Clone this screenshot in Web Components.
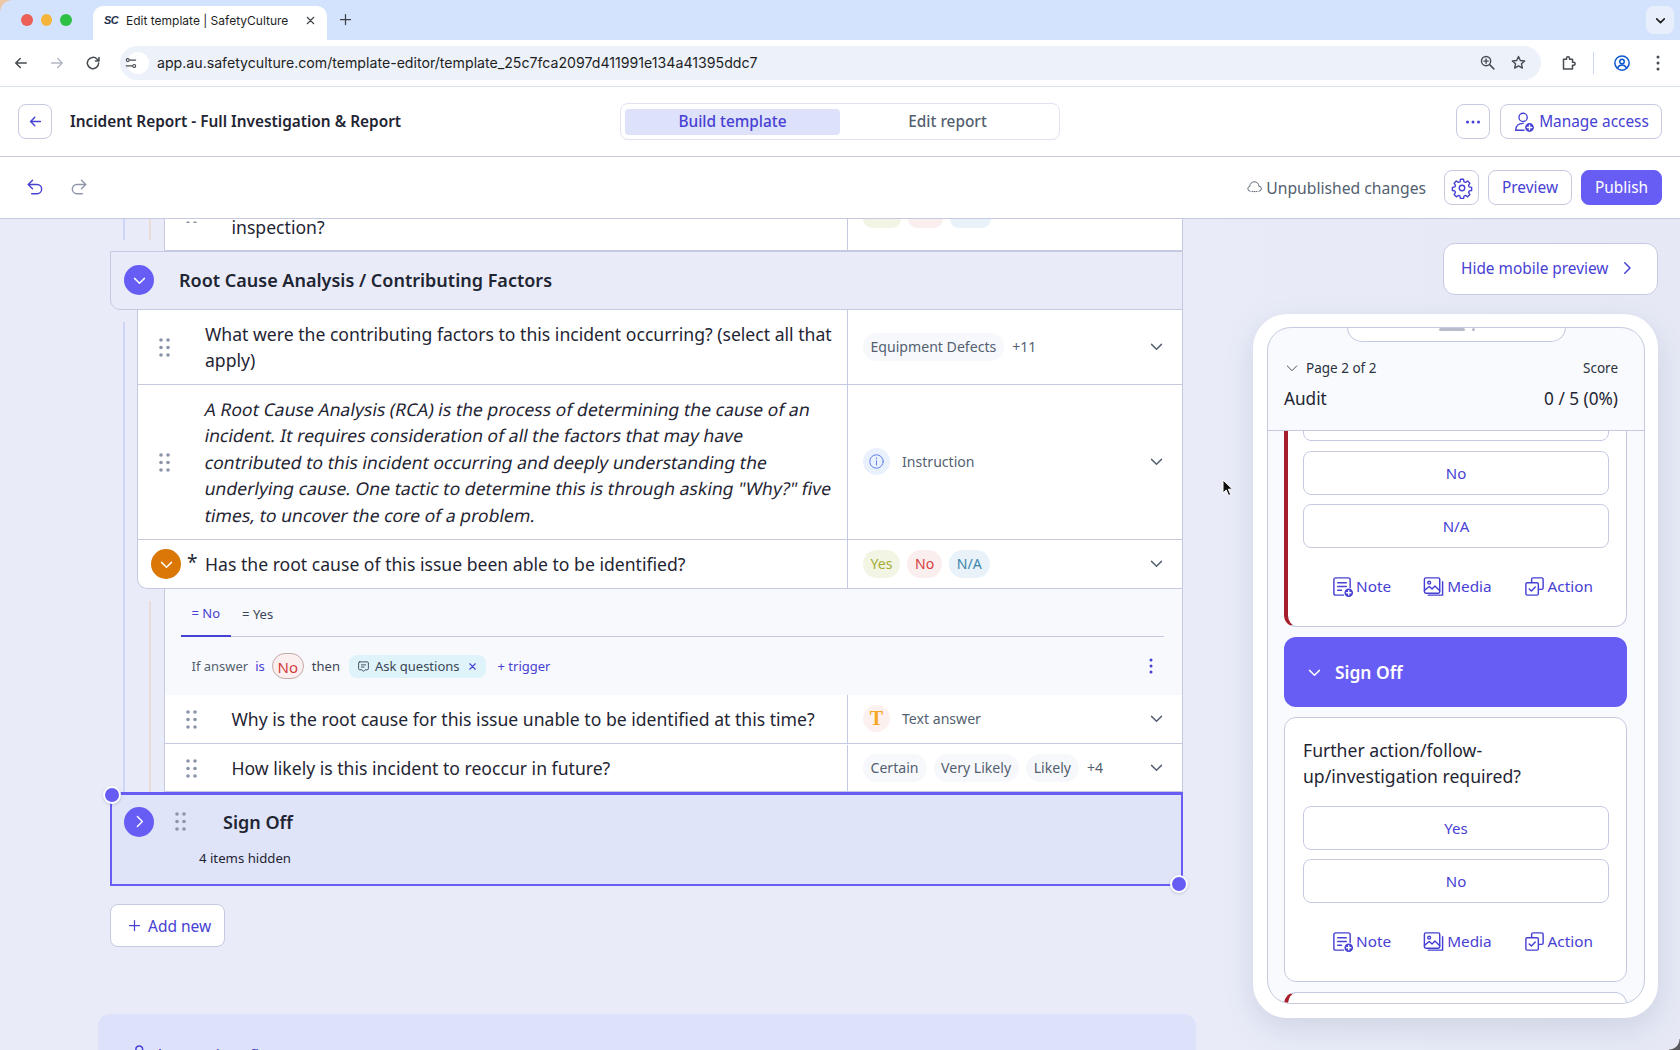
<!DOCTYPE html>
<html lang="en">
<head>
<meta charset="utf-8">
<title>Edit template | SafetyCulture</title>
<style>
  html, body { margin: 0; padding: 0; width: 1680px; height: 1050px; overflow: hidden; }
  body {
    font-family: "Noto Sans", "Open Sans", sans-serif;
    color: #1f2533;
    background: #e9ecf8;
    display: flex;
    flex-direction: column;
  }
</style>
</head>
<body>
  <chrome-tabs></chrome-tabs>
  <chrome-toolbar></chrome-toolbar>
  <app-header></app-header>
  <editor-toolbar></editor-toolbar>
  <editor-area>
    <template-list>
      <tmpl-group guide="blue" tail>
        <tmpl-group guide="pink" tail>
          <tmpl-row drag="clip">inspection?
            <chip-stub slot="answer" w="38" tone="#f2f5e4"></chip-stub><chip-stub slot="answer" w="35" tone="#fbeeee"></chip-stub><chip-stub slot="answer" w="41" tone="#e8f2f8"></chip-stub>
          </tmpl-row>
        </tmpl-group>
      </tmpl-group>
      <tmpl-section>Root Cause Analysis / Contributing Factors</tmpl-section>
      <tmpl-group guide="blue">
        <tmpl-row style="height:75px">What were the contributing factors to this incident occurring? (select all that apply)
          <ans-chip slot="answer">Equipment Defects</ans-chip><ans-more slot="answer">+11</ans-more>
        </tmpl-row>
        <tmpl-row style="height:155px">
          <skew-line>A Root Cause Analysis (RCA) is the process of determining the cause of an</skew-line>
          <skew-line>incident. It requires consideration of all the factors that may have</skew-line>
          <skew-line>contributed to this incident occurring and deeply understanding the</skew-line>
          <skew-line>underlying cause. One tactic to determine this is through asking "Why?" five</skew-line>
          <skew-line>times, to uncover the core of a problem.</skew-line>
          <type-badge slot="answer" type="info">Instruction</type-badge>
        </tmpl-row>
        <tmpl-row style="height:49px" required>Has the root cause of this issue been able to be identified?
          <ans-chip slot="answer" kind="yes">Yes</ans-chip><ans-chip slot="answer" kind="no">No</ans-chip><ans-chip slot="answer" kind="na">N/A</ans-chip>
        </tmpl-row>
        <tmpl-group guide="pink">
          <logic-panel></logic-panel>
          <tmpl-row style="height:49px">Why is the root cause for this issue unable to be identified at this time?
            <type-badge slot="answer" type="text">Text answer</type-badge>
          </tmpl-row>
          <tmpl-row style="height:48px;padding-top:1px">How likely is this incident to reoccur in future?
            <ans-chip slot="answer">Certain</ans-chip><ans-chip slot="answer">Very Likely</ans-chip><ans-chip slot="answer">Likely</ans-chip><ans-more slot="answer">+4</ans-more>
          </tmpl-row>
        </tmpl-group>
      </tmpl-group>
      <tmpl-section selected>Sign Off</tmpl-section>
      <add-new></add-new>
      <approval-block></approval-block>
    </template-list>
    <mobile-side>
      <hide-preview></hide-preview>
      <phone-frame>
        <mp-card clipped style="margin-top:-19px">
          <mp-option style="margin-top:-16px;margin-bottom:10px">Yes</mp-option>
          <mp-option>No</mp-option>
          <mp-option>N/A</mp-option>
          <mp-actions></mp-actions>
        </mp-card>
        <mp-section>Sign Off</mp-section>
        <mp-card question="Further action/follow-up/investigation required?">
          <mp-option>Yes</mp-option>
          <mp-option>No</mp-option>
          <mp-actions></mp-actions>
        </mp-card>
        <mp-card clipped></mp-card>
      </phone-frame>
    </mobile-side>
  </editor-area>
  <mouse-cursor></mouse-cursor>
  <window-corners></window-corners>

<script>
const ICONS = {
  back: '<path d="M19 12H5M11 6l-6 6 6 6"/>',
  forward: '<path d="M5 12h14M13 6l6 6-6 6"/>',
  reload: '<path d="M19.5 12a7.5 7.5 0 1 1-2.2-5.3L20 9.2M20 4.5v4.8h-4.8"/>',
  undo: '<path d="M9 4L4 9l5 5"/><path d="M4 9h10.5a5.5 5.5 0 0 1 0 11H8"/>',
  redo: '<path d="M15 4l5 5-5 5"/><path d="M20 9H9.5a5.5 5.5 0 0 0 0 11H16"/>',
  chevDown: '<path d="M5 9l7 7 7-7"/>',
  chevRight: '<path d="M9 5l7 7-7 7"/>',
  plus: '<path d="M12 4v16M4 12h16"/>',
  close: '<path d="M6 6l12 12M18 6L6 18"/>',
  tune: '<path d="M10 7h10M4 17h10"/><circle cx="6.5" cy="7" r="2.5"/><circle cx="17.5" cy="17" r="2.5"/>',
  zoom: '<circle cx="10" cy="10" r="6.5"/><path d="M15 15l6 6M10 7v6M7 10h6"/>',
  star: '<path d="M12 3.5l2.6 5.6 6.1.7-4.5 4.1 1.2 6-5.4-3-5.4 3 1.2-6-4.5-4.1 6.100-.7z"/>',
  puzzle: '<path d="M6 7h4V5.500a2 2 0 0 1 4 0V7h4v4h1.500a2 2 0 0 1 0 4H18v5H6z"/>',
  profile: '<circle cx="12" cy="12" r="9.500"/><circle cx="12" cy="10" r="3"/><path d="M6 18.500c1.500-3 3.500-4 6-4s4.500 1 6 4"/>',
  gear: '<circle cx="12" cy="12" r="3"/><path d="M10.300 2.500h3.400l.5 2.700 1.700.7 2.300-1.500 2.400 2.400-1.500 2.300.7 1.700 2.700.5v3.400l-2.700.5-.7 1.700 1.500 2.300-2.400 2.400-2.300-1.500-1.700.7-.5 2.700h-3.400l-.5-2.700-1.700-.7-2.300 1.500-2.400-2.400 1.500-2.300-.7-1.700-2.700-.5v-3.400l2.700-.5.7-1.700-1.500-2.300 2.400-2.400 2.300 1.500 1.700-.7z"/>',
  cloud: '<path d="M5 18a4 4 0 0 1-.5-7.900 7 7 0 0 1 14.500-.1A4 4 0 0 1 19 18"/><path d="M8 18.500h8" stroke-dasharray="1.500 2"/>',
  access: '<circle cx="11" cy="7" r="4.500"/><path d="M3 21c0-5 3-7.500 8-7.500"/><path d="M3 21h9"/><circle cx="18" cy="18" r="4.800" fill="currentColor" stroke="none"/><path d="M18 15.500v5M15.500 18h5" stroke="#fff"/>',
  info: '<circle cx="12" cy="12" r="9.500"/><path d="M12 11v6M12 7v1.200"/>',
  chat: '<path d="M5 3.500h14a2 2 0 0 1 2 2V16a2 2 0 0 1-2 2h-4l-3 3-3-3H5a2 2 0 0 1-2-2V5.500a2 2 0 0 1 2-2z"/><path d="M8 9h8M8 13h5"/>',
  note: '<path d="M13 21H5a2 2 0 0 1-2-2V5a2 2 0 0 1 2-2h13a2 2 0 0 1 2 2v8"/><path d="M7 8h9M7 12h9M7 16h4"/><circle cx="18.500" cy="18.500" r="4.500" fill="currentColor" stroke="none"/><path d="M18.500 16.300v4.400M16.300 18.500h4.400" stroke="#fff"/>',
  media: '<rect x="2.500" y="3" width="16" height="16" rx="1.500"/><path d="M21.500 7v14h-15"/><circle cx="7.500" cy="8" r="1.500"/><path d="M2.500 16l5-4 3 2.500 3-3 5 5"/>',
  action: '<path d="M9 7V4.500A1.500 1.500 0 0 1 10.500 3h9A1.500 1.500 0 0 1 21 4.500v9a1.500 1.500 0 0 1-1.500 1.500H17"/><rect x="3" y="8" width="13" height="13" rx="1.500"/><path d="M6.500 14.500l2.300 2.300 4-4.300"/>'
};

class UiIcon extends HTMLElement {
  connectedCallback() {
    const size = this.getAttribute('size') || 18;
    const sw = this.getAttribute('sw') || 2;
    this.attachShadow({ mode: 'open' }).innerHTML = `
      <style>:host { display: inline-flex; flex: none; line-height: 0; }</style>
      <svg width="${size}" height="${size}" viewBox="0 0 24 24" fill="none" stroke="currentColor"
        stroke-width="${sw}" stroke-linecap="round" stroke-linejoin="round">${ICONS[this.getAttribute('name')]}</svg>`;
  }
}

class DragDots extends HTMLElement {
  connectedCallback() {
    let dots = '';
    for (const y of [2, 9.5, 17]) for (const x of [2, 9]) dots += `<circle cx="${x}" cy="${y}" r="1.800"/>`;
    this.attachShadow({ mode: 'open' }).innerHTML = `
      <style>:host { display: inline-flex; flex: none; line-height: 0; }</style>
      <svg width="11" height="19" viewBox="0 0 11 19" fill="#8b94a9">${dots}</svg>`;
  }
}

// small helper: plain shadow element from a string
function shadowEl(name, html) {
  customElements.define(name, class extends HTMLElement {
    connectedCallback() {
      this.attachShadow({ mode: 'open' }).innerHTML = typeof html === 'function' ? html(this) : html;
    }
  });
}

customElements.define('ui-icon', UiIcon);
customElements.define('drag-dots', DragDots);

shadowEl('chrome-tabs', `
  <style>
    :host { display: flex; height: 40px; background: #d3e3fd; flex: none; align-items: flex-end; font-family: Inter, sans-serif; }
    .lights { display: flex; gap: 8px; padding: 0 0 14px 21px; width: 72px; box-sizing: border-box; align-self: flex-end; }
    .lights i { width: 12px; height: 12px; border-radius: 50%; display: block; }
    .tab {
      width: 234px; height: 34px; background: #fff; border-radius: 10px 10px 0 0; box-sizing: border-box;
      display: flex; align-items: center; padding: 0 10px 6px 11px; font-size: 12px; color: #1f1f1f; margin-left: 21px;
    }
    .fav { font: italic 700 11px "Liberation Sans", sans-serif; color: #23304d; width: 22px; letter-spacing: -.6px; }
    .title { flex: 1; white-space: nowrap; }
    .tab ui-icon { color: #3c4043; }
    .new { margin: 0 0 13px 11px; color: #3c4043; line-height: 0; }
    .end { margin-left: auto; margin-right: 6px; margin-bottom: 6px; width: 28px; height: 28px; border-radius: 8px; background: #e7effd;
           display: flex; align-items: center; justify-content: center; color: #1f1f1f; }
  </style>
  <div class="lights"><i style="background:#ec5f57"></i><i style="background:#f5b53a"></i><i style="background:#2fc145"></i></div>
  <div class="tab"><span class="fav">SC</span><span class="title">Edit template | SafetyCulture</span><ui-icon name="close" size="13"></ui-icon></div>
  <div class="new"><ui-icon name="plus" size="15"></ui-icon></div>
  <div class="end"><ui-icon name="chevDown" size="13" sw="3"></ui-icon></div>
`);

shadowEl('chrome-toolbar', `
  <style>
    :host { display: flex; align-items: center; height: 47px; box-sizing: border-box; background: #fff; border-bottom: 1px solid #dde3ee;
            flex: none; color: #474c52; font-family: Inter, sans-serif; padding-bottom: 1px; }
    .nav { width: 120px; display: flex; gap: 18px; padding-left: 12px; box-sizing: border-box; }
    .pill { width: 1421px; height: 34px; border-radius: 17px; background: #edf2fa; display: flex; align-items: center; padding-left: 7px; box-sizing: border-box; }
    .site { width: 22px; height: 22px; border-radius: 50%; background: #fff; display: flex; align-items: center; justify-content: center; margin-right: 8px; }
    .url { font-size: 14.150px; color: #1f1f1f; flex: 1; white-space: nowrap; }
    .pill ui-icon { margin-right: 14px; }
    .tools { display: flex; align-items: center; margin-left: 18px; }
    .sep { width: 1px; height: 22px; background: #c9d8f0; margin: 0 19px 0 16px; }
  </style>
  <div class="nav"><ui-icon name="back" size="18"></ui-icon><ui-icon name="forward" size="18" style="color:#b4b8c4"></ui-icon><ui-icon name="reload" size="18"></ui-icon></div>
  <div class="pill">
    <span class="site"><ui-icon name="tune" size="14"></ui-icon></span>
    <span class="url">app.au.safetyculture.com/template-editor/template_25c7fca2097d411991e134a41395ddc7</span>
    <ui-icon name="zoom" size="17"></ui-icon><ui-icon name="star" size="17"></ui-icon>
  </div>
  <div class="tools">
    <ui-icon name="puzzle" size="18"></ui-icon><span class="sep"></span>
    <ui-icon name="profile" size="18" style="color:#0b57d0"></ui-icon>
    <svg width="4" height="16" viewBox="0 0 4 16" fill="#474c52" style="margin-left:25px"><circle cx="2" cy="2" r="1.500"/><circle cx="2" cy="8" r="1.500"/><circle cx="2" cy="14" r="1.500"/></svg>
  </div>
`);

shadowEl('app-button', `
  <style>
    :host { display: inline-flex; flex: none; align-items: center; justify-content: center; gap: 4px; height: 35px; box-sizing: border-box;
            border: 1px solid #c5cae0; border-radius: 8px; background: #fff; color: #4740d4; font-size: 15.400px; white-space: nowrap; }
    :host([primary]) { background: #675df4; border-color: #675df4; color: #fff; }
  </style>
  <slot></slot>
`);

shadowEl('app-header', `
  <style>
    :host { display: grid; grid-template-columns: 602px 440px 1fr; align-items: center; height: 70px; box-sizing: border-box; padding-left: 18px;
            background: #fff; border-bottom: 1px solid #c5cae0; flex: none; }
    .left { display: flex; align-items: center; gap: 18px; }
    .title { font-weight: 600; font-size: 15.400px; color: #1f2533; white-space: nowrap; }
    .seg { display: flex; height: 37px; box-sizing: border-box; border: 1px solid #dfe3f0; border-radius: 8px; padding: 5px 4px 4px; font-size: 15.400px; }
    .seg span { flex: 1; display: flex; align-items: center; justify-content: center; border-radius: 4px; color: #545f70; font-weight: 500; padding-bottom: 2px; }
    .seg .on { background: #dde1f9; color: #4740d4; }
    .right { display: flex; justify-content: flex-end; gap: 10px; padding-right: 18px; }
  </style>
  <div class="left"><app-button style="width:34px"><ui-icon name="back" size="17" style="color:#4740d4"></ui-icon></app-button><span class="title">Incident Report - Full Investigation &amp; Report</span></div>
  <div class="seg"><span class="on">Build template</span><span>Edit report</span></div>
  <div class="right">
    <app-button style="width:34px"><svg width="16" height="4" viewBox="0 0 16 4" fill="#4740d4"><circle cx="2.500" cy="2" r="1.500"/><circle cx="8" cy="2" r="1.500"/><circle cx="13.500" cy="2" r="1.500"/></svg></app-button>
    <app-button style="width:162px"><ui-icon name="access" size="22" sw="1.500"></ui-icon>Manage access</app-button>
  </div>
`);

shadowEl('editor-toolbar', `
  <style>
    :host { display: flex; align-items: center; height: 62px; box-sizing: border-box; background: #fff; border-bottom: 1px solid #c5cae0; flex: none; padding: 0 18px 0 25px; }
    .undo { display: flex; gap: 24px; margin-top: -1px; }
    .right { margin-left: auto; display: flex; align-items: center; }
    .status { display: flex; align-items: center; gap: 4px; color: #545f70; font-size: 15.700px; margin-right: 18px; white-space: nowrap; }
  </style>
  <div class="undo"><ui-icon name="undo" size="20" sw="1.700" style="color:#4740d4"></ui-icon><ui-icon name="redo" size="20" sw="1.700" style="color:#8f97ab"></ui-icon></div>
  <div class="right">
    <span class="status"><ui-icon name="cloud" size="15" sw="1.500"></ui-icon>Unpublished changes</span>
    <app-button style="width:35px"><ui-icon name="gear" size="22" sw="1.500"></ui-icon></app-button>
    <app-button style="width:84px;margin-left:9px">Preview</app-button>
    <app-button primary style="width:81px;margin-left:9px">Publish</app-button>
  </div>
`);

shadowEl('editor-area', `
  <style>:host { display: flex; flex: 1; min-height: 0; overflow: hidden; background: linear-gradient(90deg, #e9ecf8 70%, #e6e9f5 100%); }</style>
  <slot></slot>
`);

shadowEl('template-list', `
  <style>:host { display: block; width: 1073px; margin-left: 110px; flex: none; }</style>
  <slot></slot>
`);

// nested question group, with its coloured guide line down the left
shadowEl('tmpl-group', (el) => {
  const blue = el.getAttribute('guide') === 'blue';
  const color = blue ? '#cfd5f6' : '#ecdcd8';
  const x = blue ? 13 : 12;
  const left = blue ? 27 : 26.5;
  const top = el.hasAttribute('tail') ? 0 : 12;
  const bottom = el.hasAttribute('tail') ? 11 : 0;
  return `
  <style>
    :host { display: block; padding-left: ${left}px;
      background: linear-gradient(${color}, ${color}) ${x}px ${top}px / 2px calc(100% - ${top + bottom}px) no-repeat; }
    :host([tail]) { height: 32px; }
  </style>
  <slot></slot>`;
});

customElements.define('tmpl-row', class extends HTMLElement {
  connectedCallback() {
    const required = this.hasAttribute('required');
    const clip = this.getAttribute('drag') === 'clip';
    let lead = '<drag-dots></drag-dots>';
    if (required) lead = `<span class="toggle"><ui-icon name="chevDown" size="17" sw="2"></ui-icon></span><span class="star">*</span>`;
    if (clip) lead = '<span class="clip"><drag-dots></drag-dots></span>';
    this.attachShadow({ mode: 'open' }).innerHTML = `
      <style>
        :host { display: grid; grid-template-columns: 1fr 335px; box-sizing: border-box; min-height: 32px; background: #fff;
                border: 1px solid #c5cae0; border-width: 0 1px 1px 1px; }
        :host([required]) { border-bottom-left-radius: 10px; }
        :host([drag="clip"]) { height: 32px; }
        .q { display: flex; align-items: center; min-width: 0; }
        :host([drag="clip"]) .q { align-items: flex-start; }
        :host([drag="clip"]) .text { line-height: 16px; }
        :host([drag="clip"]) .a { align-items: flex-start; padding-bottom: 0; }
        .lead { width: 67px; flex: none; padding-left: 21px; box-sizing: border-box; display: flex; align-items: center; }
        .text { font-size: 17.600px; line-height: 26.500px; color: #1f2533; padding-right: 8px; }
        .a { border-left: 1px solid #c5cae0; display: flex; align-items: center; gap: 7px; padding: 0 17px 1px 15px; position: relative; }
        .a > ui-icon { position: absolute; right: 17px; color: #545f70; }
        .toggle { width: 30px; height: 30px; margin-left: -8px; border-radius: 50%; background: #db7706; color: #fff; display: flex; align-items: center; justify-content: center; flex: none; }
        .star { margin-left: 6px; font-size: 19px; line-height: 1; margin-top: -4px; }
        .clip { height: 4px; overflow: hidden; display: block; line-height: 0; }
        .clip drag-dots { margin-top: -15px; }
      </style>
      <div class="q"><div class="lead">${lead}</div><div class="text"><slot></slot></div></div>
      <div class="a"><slot name="answer"></slot>${clip ? '' : '<ui-icon name="chevDown" size="17" sw="2"></ui-icon>'}</div>`;
  }
});

// the instruction row renders as a slanted regular face, one line at a time
shadowEl('skew-line', `
  <style>:host { display: block; white-space: nowrap; transform: skewX(-11deg); width: fit-content; }</style>
  <slot></slot>
`);

shadowEl('chip-stub', (el) => `
  <style>:host { display: block; width: ${el.getAttribute('w')}px; height: 9px; border-radius: 0 0 14px 14px; background: ${el.getAttribute('tone')}; }</style>
`);

shadowEl('ans-chip', (el) => {
  const kinds = { yes: ['#f2f5e4', '#a3ab37'], no: ['#fbeeee', '#d63d3d'], na: ['#e8f2f8', '#3b86ad'] };
  const [bg, fg] = kinds[el.getAttribute('kind')] || ['#f7f8fb', '#545f70'];
  return `
  <style>:host { display: inline-flex; align-items: center; height: 28px; padding: 0 8px 0 7.500px; border-radius: 14px; background: ${bg}; color: ${fg}; font-size: 14.100px; white-space: nowrap; }</style>
  <slot></slot>`;
});

shadowEl('ans-more', `
  <style>:host { display: inline-block; color: #545f70; font-size: 14.100px; margin-left: 1px; }</style>
  <slot></slot>
`);

shadowEl('type-badge', (el) => {
  const text = el.getAttribute('type') === 'text';
  return `
  <style>
    :host { display: inline-flex; align-items: center; gap: 12px; color: #545f70; font-size: 14.100px; }
    .c { width: 27px; height: 27px; border-radius: 50%; display: flex; align-items: center; justify-content: center; flex: none;
         background: ${text ? '#fdf1ef' : '#e9f1fd'}; color: ${text ? '#f5a623' : '#5f7df2'}; }
    .t { font: 700 20px "Liberation Serif", serif; }
  </style>
  <span class="c">${text ? '<span class="t">T</span>' : '<ui-icon name="info" size="17" sw="1.400"></ui-icon>'}</span><slot></slot>`;
});

shadowEl('logic-panel', `
  <style>
    :host { display: block; height: 106px; box-sizing: border-box; background: #f7f9fd; border-right: 1px solid #c5cae0; border-left: 1px solid #c5cae0; padding-left: 16px; font-size: 13px; }
    .tabs { display: flex; height: 48px; margin-right: 18px; border-bottom: 1px solid #c5cae0; box-sizing: border-box; }
    .tab { display: flex; align-items: center; padding: 2px 11px 0; height: 48px; box-sizing: border-box; color: #3c4555; }
    .tab.on { color: #4740d4; border-bottom: 2px solid #4740d4; }
    .rule { display: flex; align-items: center; height: 57px; color: #545f70; padding: 1px 0 0 11px; box-sizing: border-box; white-space: nowrap; }
    .is { color: #4740d4; margin-left: 7px; }
    .no { display: inline-flex; align-items: center; justify-content: center; width: 32px; height: 26px; box-sizing: border-box; margin-left: 7px; border-radius: 13px;
          border: 1px solid #c5a9a9; background: #fbf0ef; color: #d23b3b; font-size: 15px; padding-top: 2px; }
    .then { margin-left: 8px; color: #3c4555; }
    .ask { display: inline-flex; align-items: center; gap: 5px; height: 23px; padding: 0 8px; margin-left: 9px; border-radius: 8px; background: #def4fa; color: #3c4555; }
    .ask ui-icon:last-child { color: #4740d4; margin-left: 2px; }
    .add { color: #4740d4; margin-left: 12px; }
    .more { margin-left: auto; margin-right: 29px; line-height: 0; }
  </style>
  <div class="tabs"><span class="tab on">= No</span><span class="tab">= Yes</span></div>
  <div class="rule">If answer<span class="is">is</span><span class="no">No</span><span class="then">then</span>
    <span class="ask"><ui-icon name="chat" size="13" sw="1.700"></ui-icon>Ask questions<ui-icon name="close" size="11" sw="2.400"></ui-icon></span>
    <span class="add">+ trigger</span>
    <span class="more"><svg width="4" height="16" viewBox="0 0 4 16" fill="#4740d4"><circle cx="2" cy="2" r="1.500"/><circle cx="2" cy="8" r="1.500"/><circle cx="2" cy="14" r="1.500"/></svg></span>
  </div>
`);

customElements.define('tmpl-section', class extends HTMLElement {
  connectedCallback() {
    const sel = this.hasAttribute('selected');
    this.attachShadow({ mode: 'open' }).innerHTML = `
      <style>
        :host { display: block; box-sizing: border-box; height: 59px; background: #e9ecf8; border: 1px solid #c5cae0; border-bottom-left-radius: 10px; position: relative; }
        :host([selected]) { height: 94px; background: #e0e4f8; border: 2px solid #675df4; border-top-width: 3px; border-radius: 0; }
        .top { display: flex; align-items: center; height: 56px; padding-left: 13px; font-size: 18px; font-weight: 600; color: #1f2533; }
        :host([selected]) .top { height: 53px; padding-left: 12px; }
        .toggle { width: 30px; height: 30px; border-radius: 50%; background: #675df4; color: #fff; display: flex; align-items: center; justify-content: center; flex: none; margin-right: 25px; }
        :host([selected]) .toggle { margin-right: 21px; }
        :host([selected]) .title { margin-left: 37px; }
        .hidden { font-size: 13.200px; font-weight: 400; color: #1f2533; padding-left: 87px; line-height: 18px; margin-top: 1px; }
        .dot { position: absolute; width: 18px; height: 18px; box-sizing: border-box; border-radius: 50%; background: #675df4; border: 2px solid #fff; box-shadow: 0 1px 3px rgba(30,40,90,.2); }
        .dot.a { left: -9px; top: -9px; }
        .dot.b { right: -7px; bottom: -9px; }
      </style>
      <div class="top"><span class="toggle"><ui-icon name="${sel ? 'chevRight' : 'chevDown'}" size="17" sw="2"></ui-icon></span>
        ${sel ? '<drag-dots></drag-dots>' : ''}<span class="title"><slot></slot></span></div>
      ${sel ? '<div class="hidden">4 items hidden</div><span class="dot a"></span><span class="dot b"></span>' : ''}`;
  }
});

shadowEl('add-new', `
  <style>
    :host { display: flex; align-items: center; gap: 6px; width: 115px; height: 43px; box-sizing: border-box; margin-top: 18px; padding-left: 16px;
            background: #fff; border: 1px solid #c5cae0; border-radius: 8px; color: #4740d4; font-size: 15.500px; }
  </style>
  <ui-icon name="plus" size="15" sw="2"></ui-icon>Add new
`);

shadowEl('approval-block', `
  <style>
    :host { display: flex; gap: 6px; width: 1098px; height: 60px; box-sizing: border-box; margin: 67px 0 0 -12px; padding: 30px 0 0 33px;
            background: #dde1f9; border-radius: 12px 12px 0 0; color: #4740d4; font-size: 15.500px; word-spacing: 26px; }
  </style>
  <ui-icon name="access" size="18" sw="2"></ui-icon>Approval flow
`);

shadowEl('mobile-side', `
  <style>:host { display: flex; flex-direction: column; flex: none; width: 497px; box-sizing: border-box; }</style>
  <slot></slot>
`);

shadowEl('hide-preview', `
  <style>
    :host { display: flex; align-items: center; gap: 10px; flex: none; width: 215px; height: 52px; box-sizing: border-box; margin: 24px 0 0 260px; padding: 0 0 2px 17px;
            background: #fff; border: 1px solid #c5cae0; border-radius: 12px; color: #4740d4; font-size: 15.400px; white-space: nowrap; }
  </style>
  Hide mobile preview<ui-icon name="chevRight" size="18" sw="2"></ui-icon>
`);

shadowEl('phone-frame', `
  <style>
    :host { display: block; flex: none; width: 405px; height: 704px; box-sizing: border-box; margin: 19px 0 0 70px; padding: 13px 13px 14px 14px;
            background: #fff; border-radius: 34px; box-shadow: 0 10px 30px rgba(60,70,120,.14); }
    .screen { height: 100%; box-sizing: border-box; border: 1px solid #c5cae0; border-radius: 24px; background: #f8fafd; overflow: hidden; position: relative; display: flex; flex-direction: column; }
    .notch { position: absolute; top: -1px; left: 79px; width: 219px; height: 15px; background: #fff; border: 1px solid #c5cae0; border-top: 0; border-radius: 0 0 16px 16px;
             display: flex; align-items: flex-start; justify-content: center; gap: 7px; padding-top: 0; box-sizing: border-box; }
    .notch i { display: block; height: 2.500px; background: #b6bccb; border-radius: 2px; width: 26px; margin-top: 1px; }
    .notch i + i { width: 3px; }
    header { flex: none; height: 103px; box-sizing: border-box; border-bottom: 1px solid #c5cae0; padding: 29px 26px 0 16px; color: #1f2533; }
    .r1, .r2 { display: flex; justify-content: space-between; align-items: center; }
    .r1 { font-size: 13.500px; height: 22px; color: #2b3240; }
    .r1 span:first-child { display: flex; align-items: center; gap: 6px; }
    .r2 { font-size: 17.200px; margin-top: 7px; height: 24px; }
    .body { flex: 1; min-height: 0; overflow: hidden; padding: 0 17px 0 16px; }
  </style>
  <div class="screen">
    <div class="notch"><i></i><i></i></div>
    <header>
      <div class="r1"><span><ui-icon name="chevDown" size="16" sw="1.300"></ui-icon>Page 2 of 2</span><span>Score</span></div>
      <div class="r2"><span>Audit</span><span>0 / 5 (0%)</span></div>
    </header>
    <div class="body"><slot></slot></div>
  </div>
`);

customElements.define('mp-card', class extends HTMLElement {
  connectedCallback() {
    const q = this.getAttribute('question');
    this.attachShadow({ mode: 'open' }).innerHTML = `
      <style>
        :host { display: block; box-sizing: border-box; background: #fff; border: 1px solid #c5cae0; border-radius: 12px; padding: 0 17px 0 18px; margin-bottom: 10px; }
        :host([clipped]) { border-left: 4px solid #a61e2b; padding-left: 15px; min-height: 40px; }
        .q { font-size: 17.600px; line-height: 26px; padding: 19px 0 17px; color: #1f2533; }
      </style>
      ${q ? `<div class="q">${q}</div>` : ''}<slot></slot>`;
  }
});

shadowEl('mp-option', `
  <style>
    :host { display: flex; align-items: center; justify-content: center; height: 44px; box-sizing: border-box; margin-bottom: 9px;
            border: 1px solid #c5cae0; border-radius: 8px; background: #fff; color: #4740d4; font-size: 15px; }
  </style>
  <slot></slot>
`);

shadowEl('mp-actions', `
  <style>
    :host { display: flex; align-items: center; justify-content: center; height: 69px; box-sizing: border-box; padding: 0 0 11px 12px; gap: 31px; color: #4740d4; font-size: 15.300px; }
    span { display: flex; align-items: center; gap: 2px; }
  </style>
  <span><ui-icon name="note" size="23" sw="1.500"></ui-icon>Note</span>
  <span><ui-icon name="media" size="23" sw="1.500"></ui-icon>Media</span>
  <span><ui-icon name="action" size="23" sw="1.500"></ui-icon>Action</span>
`);

shadowEl('mp-section', `
  <style>
    :host { display: flex; align-items: center; gap: 12px; height: 70px; box-sizing: border-box; padding-left: 22px; margin: 1px 0 10px; border-radius: 12px;
            background: #675df4; color: #fff; font-size: 17.400px; font-weight: 600; }
  </style>
  <ui-icon name="chevDown" size="17" sw="2"></ui-icon><slot></slot>
`);

shadowEl('mouse-cursor', `
  <style>:host { position: fixed; left: 1222px; top: 479px; line-height: 0; }</style>
  <svg width="12" height="18" viewBox="0 0 12 18"><path d="M1 1v13l3.200-3 2.300 5.500 2.200-1-2.300-5.300H10.500z" fill="#111" stroke="#fff" stroke-width="1"/></svg>
`);

// rounded window corners of the captured screen
shadowEl('window-corners', `
  <style>
    span { position: fixed; width: 11px; height: 11px; }
    .tl { left: 0; top: 0; background: radial-gradient(circle at 100% 100%, transparent 10px, #efc6a4 11px); }
    .br { right: 0; bottom: 0; background: radial-gradient(circle at 0 0, transparent 10px, #5a5a5e 11px); }
  </style>
  <span class="tl"></span><span class="br"></span>
`);
</script>
</body>
</html>
